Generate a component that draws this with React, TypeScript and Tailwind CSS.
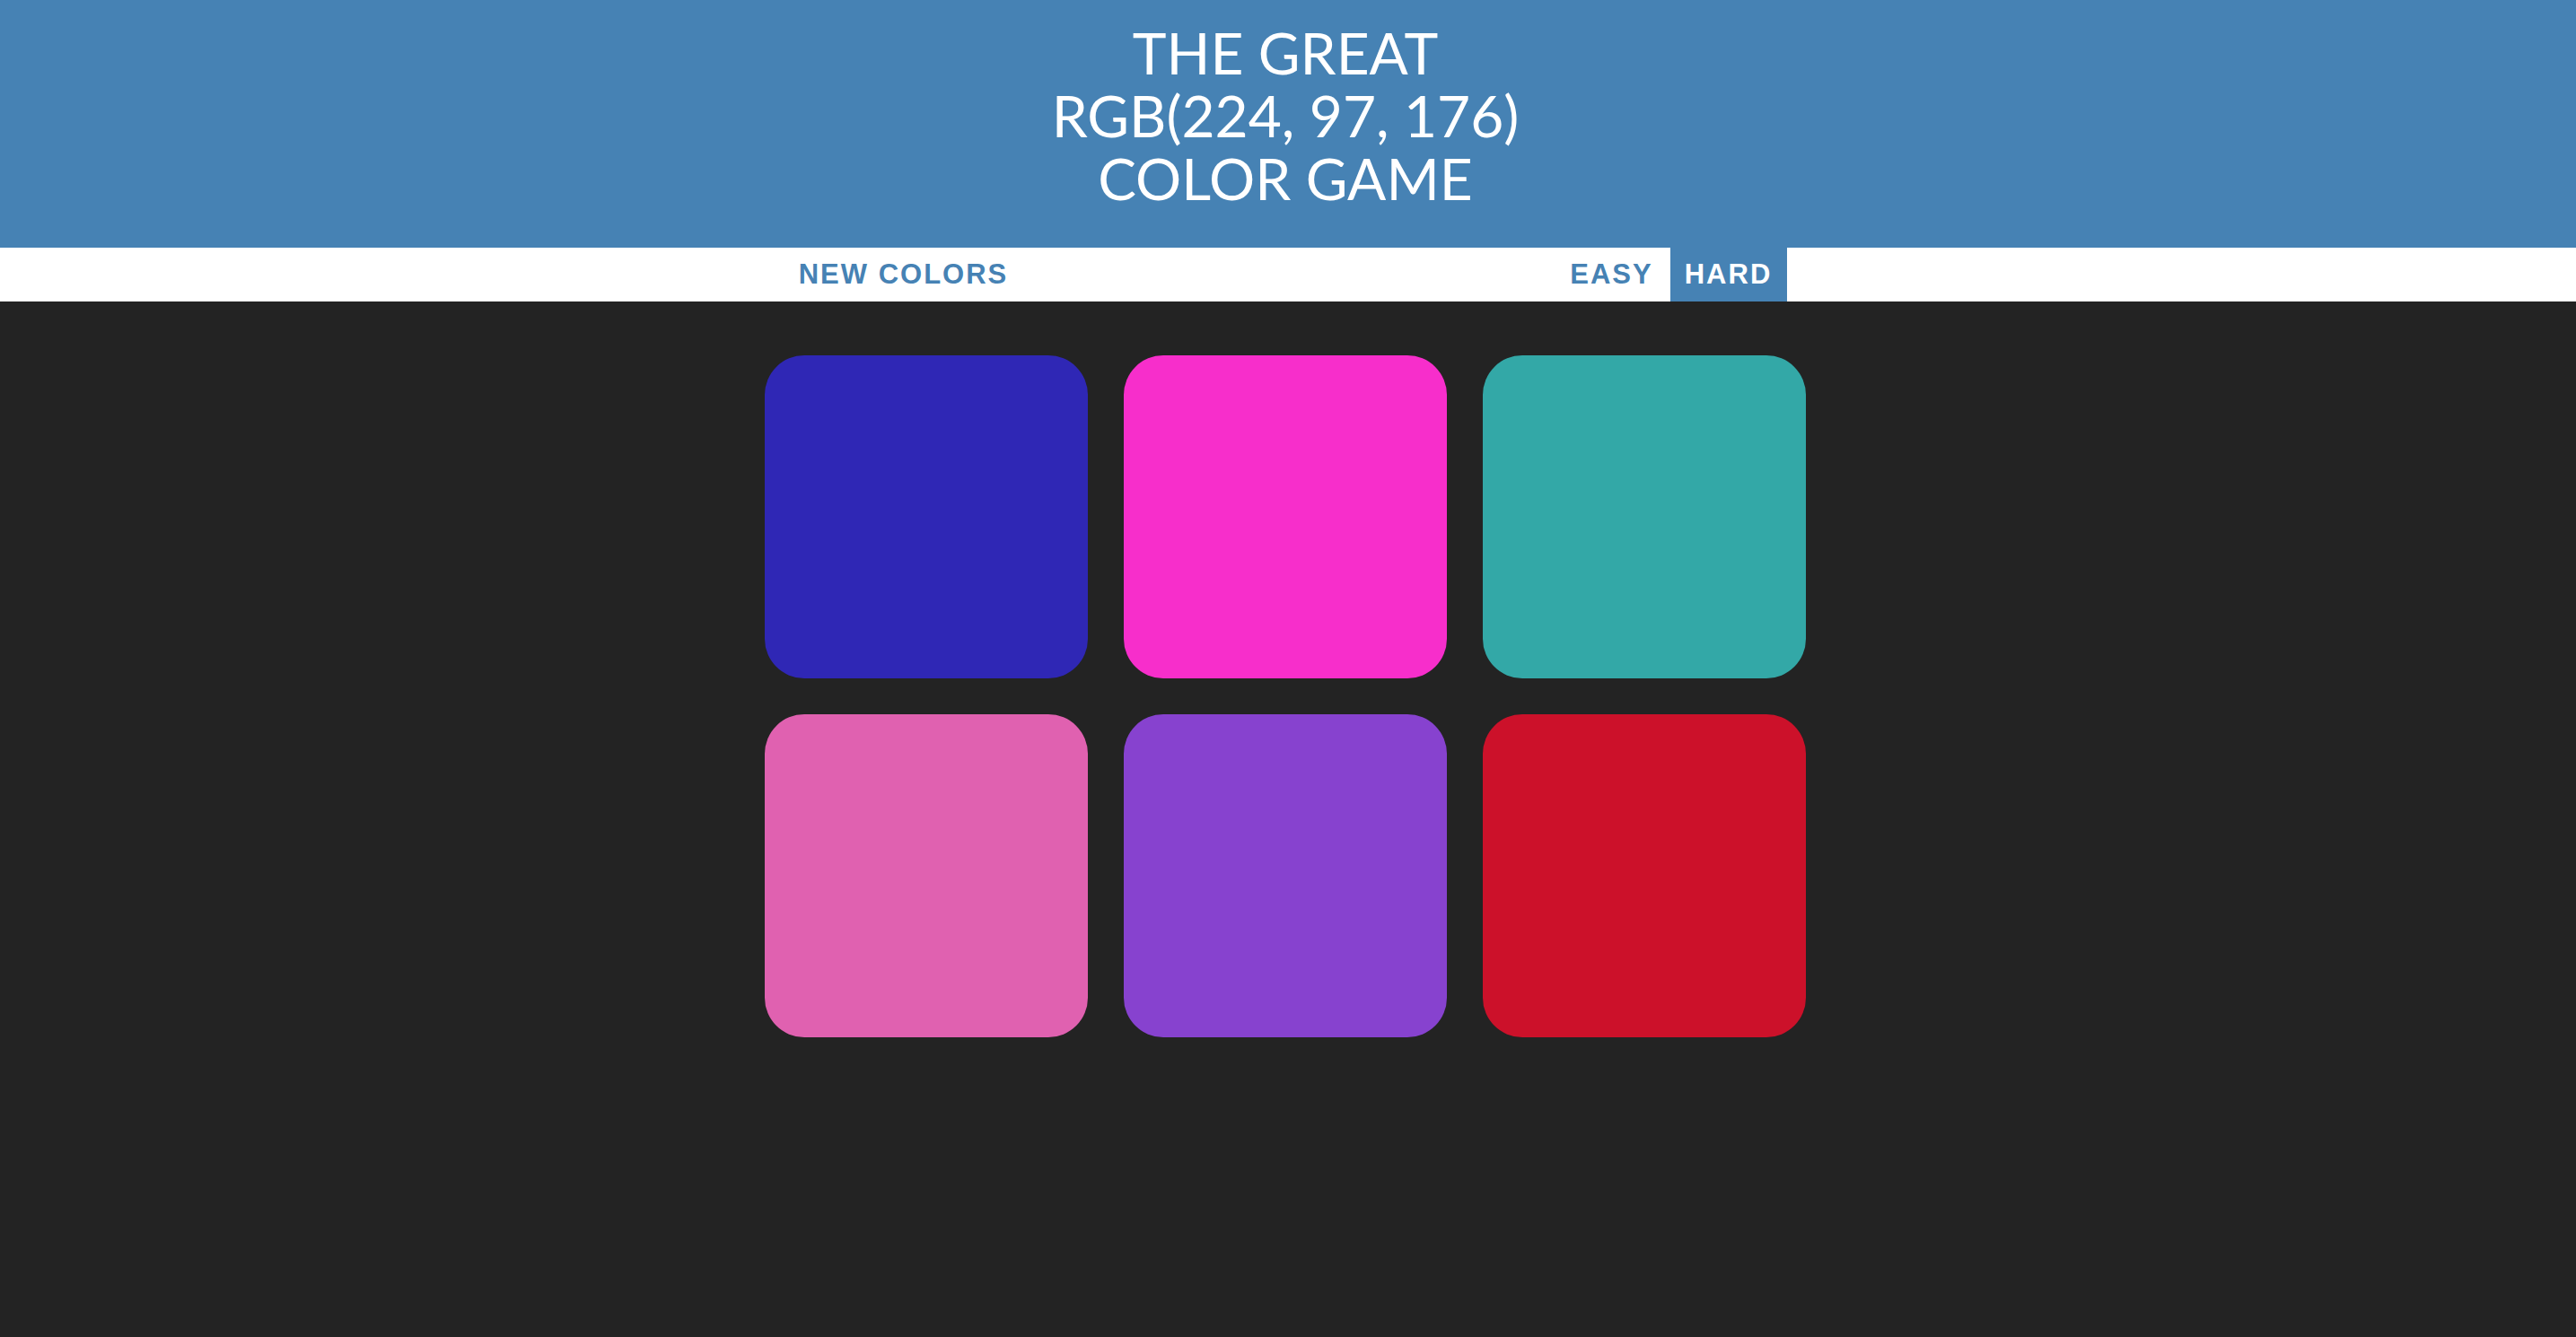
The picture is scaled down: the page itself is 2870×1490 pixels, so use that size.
import React, { useState } from 'react';

const SQUARES = ['#2f27b5', '#f72ecb', '#33a8a7', '#e061b0', '#8742cf', '#cc112a'];

const App: React.FC = () => {
  const [mode, setMode] = useState<'easy' | 'hard'>('hard');

  return (
    <div className="min-h-screen bg-[#232323] pr-[6px]">
      <h1 className="-mr-[6px] bg-[#4682b4] pt-[24px] pb-[42px] pr-[6px] text-center text-[64px] leading-[70px] font-normal uppercase text-white [font-family:Lato,'Open_Sans',sans-serif]">
        The Great
        <br />
        <span>RGB(224, 97, 176)</span>
        <br />
        Color Game
      </h1>

      <div className="-mr-[6px] flex h-[60px] items-stretch justify-center bg-white pr-[6px] text-[31px] font-bold uppercase tracking-[2px] text-[#4682b4] [font-family:'Liberation_Sans',Arial,sans-serif]">
        <button className="w-[266px] uppercase">New Colors</button>
        <span className="w-[591px]"></span>
        <button
          onClick={() => setMode('easy')}
          className={`w-[130px] uppercase ${mode === 'easy' ? 'bg-[#4682b4] text-white' : ''}`}
        >
          Easy
        </button>
        <button
          onClick={() => setMode('hard')}
          className={`w-[130px] uppercase ${mode === 'hard' ? 'bg-[#4682b4] text-white' : ''}`}
        >
          Hard
        </button>
      </div>

      <div className="mx-auto grid w-[1160px] grid-cols-3 gap-[40px] pt-[60px]">
        {(mode === 'hard' ? SQUARES : SQUARES.slice(0, 3)).map((c, i) => (
          <div key={i} className="h-[360px] w-[360px] rounded-[44px]" style={{ backgroundColor: c }} />
        ))}
      </div>
    </div>
  );
};

export default App;
